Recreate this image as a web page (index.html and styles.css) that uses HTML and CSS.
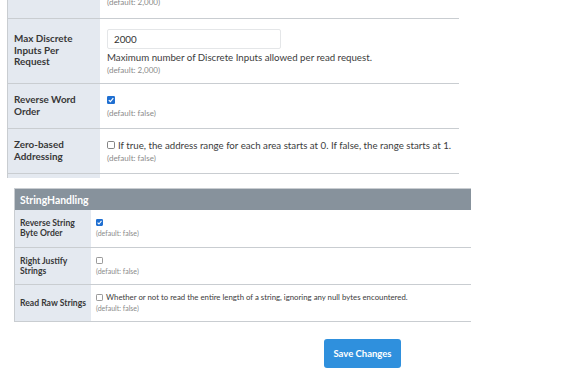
FILE: index.html
```html
<!DOCTYPE html>
<html>
<head>
<meta charset="utf-8">
<link rel="stylesheet" href="styles.css">
</head>
<body>
<div class="top-wrap">
  <table class="grid big">
    <tr class="r0">
      <td class="label">Max Coils Per Request</td>
      <td class="value"><div class="def">(default: 2,000)</div></td>
    </tr>
    <tr class="r1">
      <td class="label">Max Discrete Inputs Per Request</td>
      <td class="value">
        <div class="input">2000</div>
        <div class="desc">Maximum number of Discrete Inputs allowed per read request.</div>
        <div class="def">(default: 2,000)</div>
      </td>
    </tr>
    <tr class="r2">
      <td class="label">Reverse Word Order</td>
      <td class="value">
        <div class="line"><svg class="cb" viewBox="0 0 8 8"><rect x="0" y="0" width="8" height="8" rx="1.3" fill="#1f6fd1"/><path d="M1.8 4.1 L3.4 5.7 L6.3 2.2" fill="none" stroke="#fff" stroke-width="1.2"/></svg></div>
        <div class="def">(default: false)</div>
      </td>
    </tr>
    <tr class="r2">
      <td class="label">Zero-based Addressing</td>
      <td class="value">
        <div class="line"><svg class="cb" viewBox="0 0 8 8"><rect x="0.5" y="0.5" width="7" height="7" rx="1.2" fill="#fff" stroke="#666" stroke-width="0.8"/></svg><span class="desc">If true, the address range for each area starts at 0. If false, the range starts at 1.</span></div>
        <div class="def">(default: false)</div>
      </td>
    </tr>
    <tr class="r3">
      <td class="label"></td>
      <td class="value"></td>
    </tr>
  </table>
</div>

<table class="grid small">
  <tr class="head"><th colspan="2">StringHandling</th></tr>
  <tr class="row">
    <td class="label">Reverse String Byte Order</td>
    <td class="value">
      <div class="line"><svg class="cb" viewBox="0 0 8 8"><rect x="0" y="0" width="8" height="8" rx="1.3" fill="#1f6fd1"/><path d="M1.8 4.1 L3.4 5.7 L6.3 2.2" fill="none" stroke="#fff" stroke-width="1.2"/></svg></div>
      <div class="def">(default: false)</div>
    </td>
  </tr>
  <tr class="row">
    <td class="label">Right Justify Strings</td>
    <td class="value">
      <div class="line"><svg class="cb" viewBox="0 0 8 8"><rect x="0.5" y="0.5" width="7" height="7" rx="1.2" fill="#fff" stroke="#666" stroke-width="0.8"/></svg></div>
      <div class="def">(default: false)</div>
    </td>
  </tr>
  <tr class="row">
    <td class="label">Read Raw Strings</td>
    <td class="value">
      <div class="line"><svg class="cb" viewBox="0 0 8 8"><rect x="0.5" y="0.5" width="7" height="7" rx="1.2" fill="#fff" stroke="#666" stroke-width="0.8"/></svg><span class="desc">Whether or not to read the entire length of a string, ignoring any null bytes encountered.</span></div>
      <div class="def">(default: false)</div>
    </td>
  </tr>
</table>

<div class="actions">
  <button class="save">Save Changes</button>
</div>
</body>
</html>
```

FILE: styles.css
```css
html, body {
  margin: 0;
  padding: 0;
  background: #fff;
}
body {
  font-family: "Lato", "Open Sans", sans-serif;
  color: #3c3c3c;
  width: 584px;
  height: 371px;
  overflow: hidden;
}
.top-wrap {
  margin-left: 7px;
  width: 451px;
  height: 178px;
  overflow: hidden;
  border-left: 1px solid #c9cdd1;
}
.grid {
  border-collapse: collapse;
}
.grid td {
  border-bottom: 1px solid #c9cdd1;
  vertical-align: middle;
  padding: 0;
}
.grid .label {
  background: #e4e9f0;
  font-weight: 700;
  color: #383838;
}
.big {
  width: 451px;
  margin-top: -29px;
}
.big .label {
  width: 74px;
  padding-left: 6px;
  padding-right: 12px;
  font-size: 9.9px;
  line-height: 11.5px;
}
.big .value {
  padding-left: 7px;
}
.big .r0 { height: 47px; }
.big .r0 .value { vertical-align: bottom; padding-bottom: 10px; }
.big .r0 .label { color: transparent; }
.big .r1 { height: 65px; }
.big .r1 .value { padding-top: 3px; }
.big .r2 { height: 45px; }
.big .r3 { height: 20px; }
.big .r3 td { border-bottom: none; }
.big .input {
  width: 166px;
  height: 18px;
  border: 1px solid #e4e6e8;
  border-radius: 2px;
  font-size: 9.8px;
  line-height: 18px;
  padding-left: 6px;
  box-sizing: content-box;
  color: #333;
  margin-bottom: 1px;
}
.big .desc {
  font-size: 9.7px;
  line-height: 14px;
  color: #3c3c3c;
  white-space: nowrap;
}
.big .def {
  font-size: 8px;
  line-height: 12px;
  color: #8a8a8a;
}
.big .line {
  display: flex;
  align-items: center;
  gap: 3px;
  height: 14px;
}
.big .cb {
  width: 8px;
  height: 8px;
  flex: none;
}

.small {
  margin-left: 14px;
  margin-top: 10px;
  width: 457px;
  border-left: 1px solid #c9cdd1;
}
.small .head th {
  background: #87929c;
  color: #fff;
  text-align: left;
  font-size: 10.4px;
  font-weight: 700;
  height: 21px;
  padding: 0 0 0 5px;
  border-top: 1px solid #c9cdd1;
}
.small .row { height: 37px; }
.small .label {
  width: 71px;
  padding-left: 5px;
  font-size: 8.6px;
  line-height: 10px;
}
.small .value {
  padding-left: 5px;
}
.small .line {
  display: flex;
  align-items: center;
  gap: 3px;
  height: 11px;
}
.small .cb {
  width: 7px;
  height: 7px;
  flex: none;
}
.small .desc {
  font-size: 7.8px;
  color: #3c3c3c;
  white-space: nowrap;
}
.small .def {
  font-size: 7px;
  line-height: 11px;
  color: #8a8a8a;
}
.actions {
  padding-left: 324px;
  padding-top: 17px;
}
.save {
  width: 77px;
  height: 29px;
  border: none;
  border-radius: 3px;
  background: #2f90dd;
  color: #fff;
  font-family: "Lato", sans-serif;
  font-weight: 700;
  font-size: 9.5px;
  padding: 0;
}
```
